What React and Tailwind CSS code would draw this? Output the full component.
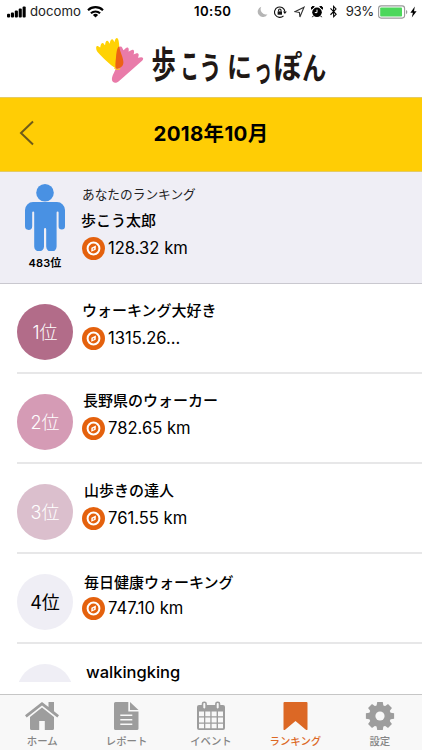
import { FaBluetoothB } from "react-icons/fa";

/* =========================
   DATA
========================= */
const rankings = [
  {
    rank: "1位",
    name: "ウォーキング大好き",
    distance: "1315.26...",
    circle: "bg-[#b26c89] text-white font-light",
    nameStyle: "mt-[15px]",
  },
  {
    rank: "2位",
    name: "長野県のウォーカー",
    distance: "782.65 km",
    circle: "bg-[#d59bb5] text-white font-light",
    nameStyle: "pl-[1px] mt-[15px]",
  },
  {
    rank: "3位",
    name: "山歩きの達人",
    distance: "761.55 km",
    circle: "bg-[#dbbfcd] text-white font-light",
    nameStyle: "pl-[2px] mt-[15px]",
  },
  {
    rank: "4位",
    name: "毎日健康ウォーキング",
    distance: "747.10 km",
    circle: "bg-[#efeef5] text-black",
    nameStyle: "pl-[2px] mt-[17px]",
  },
];

const tabs = [
  { label: "ホーム", icon: HomeIcon },
  { label: "レポート", icon: ReportIcon },
  { label: "イベント", icon: CalendarIcon },
  { label: "ランキング", icon: BookmarkIcon, active: true },
  { label: "設定", icon: GearIcon },
];

// Wordmark characters: x, baseline, horizontal and vertical scale
const wordmark = [
  { char: "歩", x: 55.5, y: 42, sx: 0.9, sy: 1.34 },
  { char: "こ", x: 84.5, y: 42, sx: 0.68, sy: 1.2 },
  { char: "う", x: 103, y: 42.5, sx: 0.84, sy: 1.14 },
  { char: "に", x: 131, y: 42, sx: 0.92, sy: 1.08 },
  { char: "っ", x: 158, y: 46, sx: 0.66, sy: 1.2 },
  { char: "ぽ", x: 177.5, y: 42, sx: 1.06, sy: 1.14 },
  { char: "ん", x: 206, y: 42.5, sx: 0.9, sy: 1.14 },
];

export default function App() {
  return (
    <div className="flex h-[750px] w-[422px] flex-col overflow-hidden bg-white font-['Inter','Noto_Sans_CJK_JP',sans-serif] text-black">
      <StatusBar />

      <header className="flex h-[73px] shrink-0 pl-[96px]">
        <Logo />
      </header>

      {/* TITLE BAR */}
      <div className="grid h-[75px] shrink-0 grid-cols-[1fr_auto_1fr] items-center border-y border-[#e4cb65] bg-[#ffcd05]">
        <svg className="-mt-[3px] ml-[19px] h-[26px] w-[16px]" viewBox="0 0 16 26" fill="none" stroke="#6f5b19" strokeWidth="2">
          <path d="M14 1.5L2 13l12 11.5" />
        </svg>
        <h1 className="text-[20.5px] leading-none font-bold tracking-[0.3px]">2018年10月</h1>
      </div>

      {/* MY RANKING */}
      <section className="flex h-[112px] shrink-0 border-b border-[#c9c8cf] bg-[#efeef5]">
        <div className="ml-[17px] flex w-[56px] flex-col items-center pt-[12px]">
          <PersonIcon />
          <div className="mt-[6px] text-[11px] leading-[12px] font-semibold tracking-[0.2px]">483位</div>
        </div>
        <div className="ml-[9px]">
          <div className="mt-[14px] text-[12.7px] leading-[18px] text-[#222]">あなたのランキング</div>
          <div className="-ml-px mt-[7px] text-[15px] leading-[20px] font-medium">歩こう太郎</div>
          <Distance value="128.32 km" className="mt-[6px]" />
        </div>
      </section>

      {/* RANKING LIST */}
      <main className="h-[398px] shrink-0 overflow-hidden">
        {rankings.map((row) => (
          <RankRow key={row.rank} row={row} />
        ))}
        {/* next row, only its top is scrolled into view */}
        <div className="ml-[17px] flex h-[38px] overflow-hidden">
          <div className="mt-[20px] h-[56px] w-[56px] shrink-0 rounded-full bg-[#efeef5]" />
          <div className="mt-[19px] ml-[13px] text-[16.5px] leading-[19px] font-medium">walkingking</div>
        </div>
      </main>

      {/* TAB BAR */}
      <nav className="mt-auto grid h-[56px] shrink-0 grid-cols-5 border-t border-[#c6c6c6] bg-[#f8f8f8]">
        {tabs.map(({ label, icon: Icon, active }) => (
          <div
            key={label}
            className={`flex flex-col items-center pt-[6px] ${active ? "text-[#dc6825]" : "text-[#9d9d9d]"}`}
          >
            <Icon />
            <span className={`mt-[4px] text-[10.4px] leading-[14px] font-medium ${active ? "" : "text-[#858585]"}`}>
              {label}
            </span>
          </div>
        ))}
      </nav>
    </div>
  );
}

/* =========================
   LIST PARTS
========================= */
function RankRow({ row }) {
  return (
    <div className="ml-[17px] flex h-[90px] border-b-2 border-[#e7e7e8]">
      <div
        className={`mt-[20px] flex h-[56px] w-[56px] shrink-0 items-center justify-center rounded-full text-[18px] ${row.circle}`}
      >
        {row.rank}
      </div>
      <div className="ml-[9px] flex h-[66px] flex-col">
        <div className={`text-[15px] leading-[24px] font-medium ${row.nameStyle}`}>{row.name}</div>
        <Distance value={row.distance} className="mt-auto" />
      </div>
    </div>
  );
}

function Distance({ value, className }) {
  return (
    <div className={`flex items-center gap-[3px] text-[16.6px] leading-[23px] ${className}`}>
      <TargetIcon />
      <span>{value}</span>
    </div>
  );
}

/* =========================
   STATUS BAR
========================= */
function StatusBar() {
  return (
    <div className="grid h-[24px] shrink-0 grid-cols-[194px_auto_1fr] items-center">
      <div className="flex items-center pl-[7px]">
        <svg width="19" height="12" viewBox="0 0 19 12">
          <rect x="0" y="7.8" width="3.1" height="3.7" rx="1" />
          <rect x="3.9" y="6.4" width="3.1" height="5.1" rx="1" />
          <rect x="7.8" y="4.5" width="3.1" height="7" rx="1" />
          <rect x="11.7" y="2.5" width="3.1" height="9" rx="1" />
          <rect x="15.6" y="0.4" width="3.1" height="11.1" rx="1" />
        </svg>
        <span className="ml-[4px] text-[13.2px] text-[#222]">docomo</span>
        <svg className="ml-[6px]" width="17" height="12" viewBox="0 0 17 12" fill="none" stroke="#000" strokeWidth="2.1">
          <path d="M1 4.2a10.8 10.8 0 0 1 15 0" />
          <path d="M3.9 7.3a6.7 6.7 0 0 1 9.2 0" />
          <path d="M8.5 11.6L5.9 9a3.8 3.8 0 0 1 5.2 0z" fill="#000" stroke="none" />
        </svg>
      </div>
      <span className="text-[13.2px] font-semibold tracking-[0.4px]">10:50</span>
      <div className="flex items-center justify-end pr-[5px]">
        <svg className="mr-[6px]" width="11" height="12" viewBox="0 0 11 12" fill="#b5b5b5">
          <path d="M4.3.8a5.2 5.2 0 1 0 6.2 7.4A5.2 5.2 0 0 1 4.3.8z" />
        </svg>
        <svg className="mr-[7px]" width="13" height="12" viewBox="0 0 13 12" fill="none" stroke="#111" strokeWidth="1.1">
          <path d="M9.5 9.8A5.2 5.2 0 1 1 10.9 5.6" />
          <path d="M9 5.4h3.8L10.9 8z" fill="#111" stroke="none" />
          <rect x="3.6" y="5.4" width="4.4" height="3.3" fill="#111" stroke="none" />
          <path d="M4.6 5.4V4.2a1.2 1.2 0 0 1 2.4 0v1.2" />
        </svg>
        <svg className="mr-[6px]" width="11" height="12" viewBox="0 0 11 12" fill="none" stroke="#333" strokeWidth="1.1">
          <path d="M10 1.2L.9 5.7l4.5.7.5 4.6z" />
        </svg>
        <svg className="mr-[4px]" width="12" height="12" viewBox="0 0 12 12">
          <circle cx="6" cy="6.3" r="4.8" />
          <path d="M.5 3.2A2 2 0 0 1 3.3.6zM11.5 3.2A2 2 0 0 0 8.7.6zM2.2 10l-.8 1.2M9.8 10l.8 1.2" stroke="#000" />
          <path d="M6 3.6v3H3.8" fill="none" stroke="#fff" />
        </svg>
        <FaBluetoothB size={13} className="mr-[6px]" />
        <span className="text-[13.2px] tracking-[-0.3px] text-[#222]">93%</span>
        <svg className="ml-[4px]" width="30" height="14" viewBox="0 0 30 14">
          <rect x="0.6" y="0.9" width="26" height="12.2" rx="2.5" fill="#fff" stroke="#999" strokeWidth="1.1" />
          <rect x="2.2" y="2.5" width="21.8" height="9" rx="0.8" fill="#4cd75b" />
          <path d="M28 5v4.2a2.3 2.3 0 0 0 0-4.2z" fill="#999" />
        </svg>
        <svg className="ml-[2px]" width="7" height="12" viewBox="0 0 7 12">
          <path d="M4.8.5L.4 6.7h2.5L1.8 11.5l4.8-6.3H4z" />
        </svg>
      </div>
    </div>
  );
}

/* =========================
   LOGO
========================= */
function Logo() {
  return (
    <svg className="mt-[8px]" width="240" height="60" viewBox="0 -4 240 60" aria-label="歩こうにっぽん">
      {/* yellow foot */}
      <path
        d="M.2 12.6C0 10.4.6 9.4 1.8 10.1L4.2 11.4C4.6 9.4 5 7 6.4 6.9 7.6 6.8 8.2 8.4 9 9.3 9.4 7.2 9.6 4.9 11 4.8 12.3 4.7 12.9 6.6 13.7 7.7 14.1 5.6 14.6 3.4 16 3.3 17.2 3.2 17.7 5.1 18.4 6.2 18.9 4.2 19.4 1.9 20.8 1.9 22.8 2 23.2 7.5 23.4 12L20.2 32.8C14 28.8 5.8 20.6 2 16.5.8 15.2.3 13.9.2 12.6z"
        fill="#ffd204"
      />
      {/* pink foot */}
      <path
        d="M22.8 11.5C24.2 10 25.8 10.4 26.5 12.2L27.4 14.3C28.8 12.9 30.5 11 31.8 11.5 33.1 12 32.8 14.1 32.6 15.8 34.2 14.8 36.2 13.3 37.4 14 38.6 14.8 38 16.9 37.6 18.4 39.2 17.7 41.3 16.7 42.3 17.7 43.2 18.6 42.5 20.4 41.9 21.7 43.7 21.3 46.3 20.6 47 21.9 47.6 23.1 46.6 24.4 45.2 25.6L23.7 44.4C21.4 46.5 19 47.6 17.2 46.1 14.8 44.2 16.2 40.1 18.2 36.3L19.6 33.3z"
        fill="#e97ba9"
      />
      {/* overlap of both feet */}
      <path d="M23.2 10.3c.5 5.4 4.5 11.7 4.2 16.5-.2 3.6-3.2 6-7.6 6-.8-3-.2-7.1.2-11.2.4-4.5.8-9.7 3.2-11.3z" fill="#ec6215" />
      <path d="M18.3 32.3c2.4 1.4 4.2 1.5 6 .4" fill="none" stroke="#ffd204" strokeWidth="1" />
      <g fill="#211815" fontFamily="'Noto Sans CJK JP', sans-serif" fontSize="27" fontWeight="700">
        {wordmark.map(({ char, x, y, sx, sy }) => (
          <text key={char} transform={`translate(${x} ${y}) scale(${sx} ${sy})`}>
            {char}
          </text>
        ))}
      </g>
    </svg>
  );
}

/* =========================
   ICONS
========================= */
function PersonIcon() {
  return (
    <svg width="40" height="67" viewBox="0 0 40 67" fill="#4991e3">
      <circle cx="20" cy="8.8" r="8.8" />
      <path d="M8 18.1h24a8 8 0 0 1 8 8v16.2a3.2 3.2 0 0 1-6.4 0V28.5a1 1 0 0 0-2 0v34a4.2 4.2 0 0 1-10.4 0V45.2a1.1 1.1 0 0 0-2.2 0v17.3a4.2 4.2 0 0 1-9.8 0v-34a1 1 0 0 0-2 0v13.8a3.5 3.5 0 0 1-7.2 0V26.1a8 8 0 0 1 8-8z" />
    </svg>
  );
}

function TargetIcon() {
  return (
    <svg width="23" height="23" viewBox="0 0 23 23" fill="none">
      <circle cx="11.5" cy="11.5" r="11.5" fill="#e4610d" />
      <circle cx="11.5" cy="11.5" r="5.9" stroke="#fff" strokeWidth="2" />
      <path d="M13.9 8.4l-.2 4.3-4.5 2 .2-4z" fill="#fff" />
      <path d="M12.3 10.9l-.2 1.4-1.4.5.2-1.3z" fill="#e4610d" />
    </svg>
  );
}

function HomeIcon() {
  return (
    <svg width="34" height="30" viewBox="0 0 34 30" fill="currentColor">
      <path d="M17 1L0 14.2l1.7 2.2L17 4.6l15.3 11.8 1.7-2.2-5-4V1h-5.5v5z" />
      <path d="M17 6.6L5 16V27.5A1.5 1.5 0 0 0 6.5 29h7.7v-9h5.6v9h7.7a1.5 1.5 0 0 0 1.5-1.5V16z" />
    </svg>
  );
}

function ReportIcon() {
  return (
    <svg width="25" height="30" viewBox="0 0 25 30">
      <path d="M1.5 1h12.8v9.5h10.2v17A1.5 1.5 0 0 1 23 29H1.5A1.5 1.5 0 0 1 0 27.5v-25A1.5 1.5 0 0 1 1.5 1zM16 1l8.5 8H16z" fill="currentColor" />
      <path d="M6.3 14.3h12M6.3 18.8h12M6.3 23.3h12" stroke="#f8f8f8" strokeWidth="1.6" />
    </svg>
  );
}

function CalendarIcon() {
  return (
    <svg width="28" height="30" viewBox="0 0 28 30">
      <rect y="4" width="28" height="25" rx="2" fill="currentColor" />
      <g fill="#f8f8f8">
        <path d="M2 10.5h5v4.8H2zM8.3 10.5h5v4.8h-5zM14.6 10.5h5v4.8h-5zM21 10.5h5v4.8h-5z" />
        <path d="M2 16.6h5v4.8H2zM8.3 16.6h5v4.8h-5zM14.6 16.6h5v4.8h-5zM21 16.6h5v4.8h-5z" />
        <path d="M2 22.7h5v4.5H2zM8.3 22.7h5v4.5h-5zM14.6 22.7h5v4.5h-5zM21 22.7h5v4.5h-5z" />
      </g>
      <g fill="#f8f8f8" stroke="currentColor" strokeWidth="1.6">
        <rect x="5.5" y="1.2" width="3.6" height="7" rx="1.6" />
        <rect x="18.9" y="1.2" width="3.6" height="7" rx="1.6" />
      </g>
    </svg>
  );
}

function BookmarkIcon() {
  return (
    <svg width="25" height="30" viewBox="0 0 25 30" fill="currentColor">
      <path d="M1.5 1h22a1 1 0 0 1 1 1v26.2c0 .9-1 1.2-1.6.5L12.5 20 2.1 28.7c-.7.7-1.6.4-1.6-.5V2a1 1 0 0 1 1-1z" />
    </svg>
  );
}

function GearIcon() {
  return (
    <svg width="30" height="30" viewBox="0 0 30 30">
      <g fill="currentColor">
        <circle cx="15" cy="15" r="11" />
        {[0, 45, 90, 135, 180, 225, 270, 315].map((angle) => (
          <path key={angle} d="M12.2.9h5.6l.8 5h-7.2z" transform={`rotate(${angle} 15 15)`} />
        ))}
      </g>
      <circle cx="15" cy="15" r="4.6" fill="#f8f8f8" />
    </svg>
  );
}
